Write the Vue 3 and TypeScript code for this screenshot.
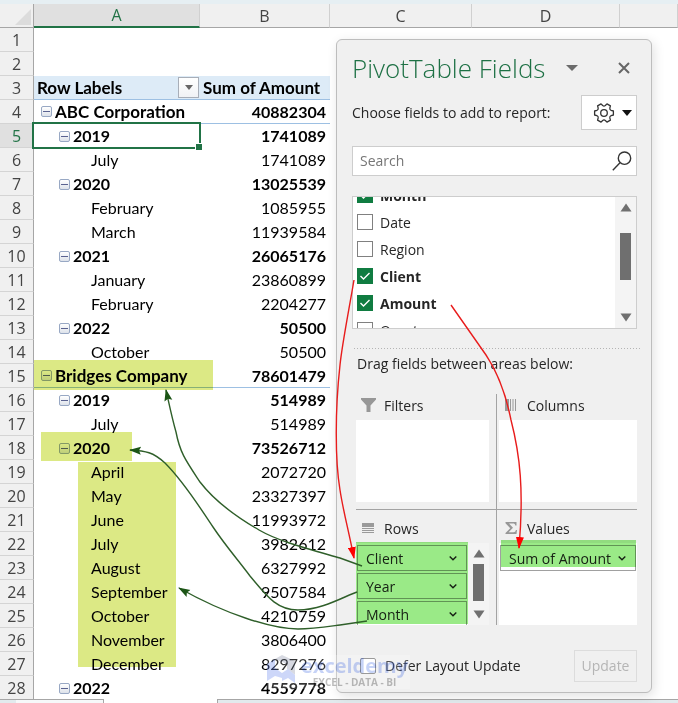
<script setup lang="ts">
import { ref } from 'vue'

type Level = 'client' | 'year' | 'month'
interface SheetRow { n: number; label?: string; level?: Level; amount?: string; header?: boolean; ruled?: boolean }
interface Field { name: string; on: boolean }
interface Arrow { d: string; color: string }

const columns: string[] = ['A', 'B', 'C', 'D', '']

const rows: SheetRow[] = [
  { n: 1 },
  { n: 2 },
  { n: 3, label: 'Row Labels', amount: 'Sum of Amount', header: true, ruled: true },
  { n: 4, label: 'ABC Corporation', level: 'client', amount: '40882304', ruled: true },
  { n: 5, label: '2019', level: 'year', amount: '1741089' },
  { n: 6, label: 'July', level: 'month', amount: '1741089' },
  { n: 7, label: '2020', level: 'year', amount: '13025539' },
  { n: 8, label: 'February', level: 'month', amount: '1085955' },
  { n: 9, label: 'March', level: 'month', amount: '11939584' },
  { n: 10, label: '2021', level: 'year', amount: '26065176' },
  { n: 11, label: 'January', level: 'month', amount: '23860899' },
  { n: 12, label: 'February', level: 'month', amount: '2204277' },
  { n: 13, label: '2022', level: 'year', amount: '50500' },
  { n: 14, label: 'October', level: 'month', amount: '50500' },
  { n: 15, label: 'Bridges Company', level: 'client', amount: '78601479', ruled: true },
  { n: 16, label: '2019', level: 'year', amount: '514989' },
  { n: 17, label: 'July', level: 'month', amount: '514989' },
  { n: 18, label: '2020', level: 'year', amount: '73526712' },
  { n: 19, label: 'April', level: 'month', amount: '2072720' },
  { n: 20, label: 'May', level: 'month', amount: '23327397' },
  { n: 21, label: 'June', level: 'month', amount: '11993972' },
  { n: 22, label: 'July', level: 'month', amount: '3982612' },
  { n: 23, label: 'August', level: 'month', amount: '6327992' },
  { n: 24, label: 'September', level: 'month', amount: '9507584' },
  { n: 25, label: 'October', level: 'month', amount: '4210759' },
  { n: 26, label: 'November', level: 'month', amount: '3806400' },
  { n: 27, label: 'December', level: 'month', amount: '8297276' },
  { n: 28, label: '2022', level: 'year', amount: '4559778' },
]

const fields = ref<Field[]>([
  { name: 'Month', on: true },
  { name: 'Date', on: false },
  { name: 'Region', on: false },
  { name: 'Client', on: true },
  { name: 'Amount', on: true },
  { name: 'Quarter', on: false },
])

const rowFields: string[] = ['Client', 'Year', 'Month']
const search = ref('')
const defer = ref(false)

const arrows: Arrow[] = [
  { color: 'green', d: 'M362 566 L340 558 C305 548 278 541 259 530 C240 519 216 503 200 482 C186 461 180 453 176 432 C172 418 170 408 166 390' },
  { color: 'green', d: 'M357 592 C345 596 322 610 298 610 C276 610 266 595 250 576 C238 560 225 545 213 527 C200 508 185 483 165 463 C153 452 146 451 130 450' },
  { color: 'green', d: 'M367 621 L340 625 C325 627 312 629 298 629 C272 629 225 614 179 588' },
  { color: 'red', d: 'M354 280 C348 315 342 345 340 365 C335 410 335 460 340 490 C343 510 348 528 354 558' },
  { color: 'red', d: 'M451 305 L486 355 C500 376 507 400 511 420 C520 455 524 490 519 548' },
]

// Six-toothed gear: flat tips every 60 degrees joined by curved valleys.
function gearPath(): string {
  const at = (deg: number, r: number): string => {
    const a = (deg * Math.PI) / 180
    return `${(11 + r * Math.cos(a)).toFixed(2)} ${(11 + r * Math.sin(a)).toFixed(2)}`
  }
  let d = ''
  for (let i = 0; i < 6; i++) {
    const t = i * 60
    d += `${i === 0 ? 'M' : 'L'}${at(t - 12, 9.6)} L${at(t + 12, 9.6)} L${at(t + 20, 7.6)} Q${at(t + 30, 6.4)} ${at(t + 40, 7.6)} `
  }
  return d + 'Z'
}
const gear = gearPath()
</script>

<template>
  <main class="workbook">
    <div class="ribbon-edge"></div>
    <table class="sheet">
      <colgroup>
        <col class="c-num" /><col class="c-a" /><col class="c-b" /><col class="c-c" /><col class="c-d" /><col />
      </colgroup>
      <thead>
        <tr>
          <th class="corner"><svg width="16" height="16" viewBox="0 0 16 16"><path d="M16 0V16H0Z" fill="#dcdcdc" /></svg></th>
          <th v-for="c in columns" :key="c" :class="{ active: c === 'A' }" scope="col">{{ c }}</th>
        </tr>
      </thead>
      <tbody>
        <tr v-for="r in rows" :key="r.n" :class="[r.level, { header: r.header, ruled: r.ruled }]">
          <th scope="row" :class="{ current: r.n === 5 }">{{ r.n }}</th>
          <td class="label" :class="{ selected: r.n === 5 }">
            <div class="label-in">
              <button v-if="r.level === 'client' || r.level === 'year'" class="toggle" aria-label="Collapse"></button>
              <span>{{ r.label }}</span>
              <button v-if="r.header" class="filter" aria-label="Filter row labels">
                <svg width="8" height="5" viewBox="0 0 8 5"><path d="M0 0H8L4 5Z" fill="#666" /></svg>
              </button>
            </div>
          </td>
          <td class="amount">{{ r.amount }}</td>
          <td></td><td></td><td></td>
        </tr>
      </tbody>
    </table>
    <div class="tabs"><i class="tab-nav"></i><i class="tab"></i><i class="tab-on"></i><i class="tab-rest"></i></div>

    <aside class="panel">
      <header class="panel-head">
        <h1>PivotTable Fields</h1>
        <button class="plain" aria-label="Pane options"><svg width="12" height="6" viewBox="0 0 12 6"><path d="M0 0H12L6 6Z" fill="#6b6b6b" /></svg></button>
        <button class="plain close" aria-label="Close"><svg width="12" height="12" viewBox="0 0 12 12"><path d="M1 1L11 11M11 1L1 11" stroke="#666" stroke-width="2" /></svg></button>
      </header>

      <div class="choose">
        <span>Choose fields to add to report:</span>
        <button class="tools" aria-label="Tools">
          <svg width="22" height="22" viewBox="0 0 22 22" fill="none" stroke="#333" stroke-width="1.3" stroke-linejoin="round"><path :d="gear" /><circle cx="11" cy="11" r="3.3" /></svg>
          <svg width="10" height="6" viewBox="0 0 10 6"><path d="M0 0H10L5 6Z" fill="#111" /></svg>
        </button>
      </div>

      <div class="search">
        <input v-model="search" type="text" placeholder="Search" aria-label="Search fields" />
        <svg width="20" height="20" viewBox="0 0 20 20" fill="none" stroke="#333" stroke-width="1.4"><circle cx="12.5" cy="7.2" r="6.2" /><path d="M8 11.8L0.8 19.2" /></svg>
      </div>

      <div class="field-box">
        <div class="field-list">
          <label v-for="f in fields" :key="f.name" :class="{ on: f.on }">
            <input v-model="f.on" type="checkbox" /><span>{{ f.name }}</span>
          </label>
        </div>
        <div class="scroll">
          <svg width="12" height="9" viewBox="0 0 12 9"><path d="M6 0.5L11.5 8.5H0.5Z" fill="#707070" /></svg>
          <i class="thumb"></i><i class="track"></i>
          <svg width="12" height="9" viewBox="0 0 12 9"><path d="M6 8.5L11.5 0.5H0.5Z" fill="#707070" /></svg>
        </div>
      </div>

      <div class="dots"></div>
      <p class="drag">Drag fields between areas below:</p>

      <div class="areas">
        <section>
          <h2><svg width="15" height="14" viewBox="0 0 15 14"><path d="M0 0H15V1.5L9.5 7.5V14H5.5V7.5L0 1.5Z" fill="#979797" /></svg>Filters</h2>
          <div class="zone"></div>
        </section>
        <section>
          <h2><svg width="15" height="14" viewBox="0 0 15 14"><path d="M1 1H5V13H1Z" fill="#9a9a9a" /><path d="M6.5 1V13M9 1V13M11.5 1V13" stroke="#9a9a9a" /></svg>Columns</h2>
          <div class="zone"></div>
        </section>
        <section>
          <h2><svg width="15" height="14" viewBox="0 0 15 14"><path d="M1 2H13V6H1Z" fill="#9a9a9a" /><path d="M1 7.5H13M1 9.5H13M1 11.5H13" stroke="#9a9a9a" /></svg>Rows</h2>
          <div class="zone">
            <div class="chips">
              <button v-for="c in rowFields" :key="c" class="chip">{{ c }}
                <svg width="8" height="5" viewBox="0 0 8 5" fill="none" stroke="#222" stroke-width="1.4"><path d="M0.7 0.6L4 3.8L7.3 0.6" /></svg>
              </button>
            </div>
            <div class="scroll">
              <svg width="12" height="9" viewBox="0 0 12 9"><path d="M6 0.5L11.5 8.5H0.5Z" fill="#707070" /></svg>
              <i class="thumb"></i>
              <svg width="12" height="9" viewBox="0 0 12 9"><path d="M6 8.5L11.5 0.5H0.5Z" fill="#707070" /></svg>
            </div>
          </div>
        </section>
        <section>
          <h2><svg width="15" height="14" viewBox="0 0 15 14"><path d="M1.5 1H12.5V4.5H11.3C11 3 10.6 2.6 9 2.6H5L9 6.8L4.6 11.2H9.4C11 11.2 11.5 10.6 11.9 9H13L12.5 13H1.5V12L6.2 7.2L1.5 2.2Z" fill="#979797" /></svg>Values</h2>
          <div class="zone">
            <div class="chips">
              <button class="chip">Sum of Amount
                <svg width="8" height="5" viewBox="0 0 8 5" fill="none" stroke="#222" stroke-width="1.4"><path d="M0.7 0.6L4 3.8L7.3 0.6" /></svg>
              </button>
            </div>
          </div>
        </section>
      </div>

      <footer class="panel-foot">
        <label><input v-model="defer" type="checkbox" /><span>Defer Layout Update</span></label>
        <button class="update" disabled>Update</button>
      </footer>
    </aside>

    <svg class="overlay marker" width="678" height="703" viewBox="0 0 678 703" aria-hidden="true">
      <g fill="#dce985">
        <rect x="34" y="360" width="179" height="30" />
        <rect x="41" y="432" width="91" height="29" />
        <rect x="78" y="462" width="98" height="205" />
      </g>
      <g fill="#9aea87">
        <rect x="356" y="542" width="112" height="82" />
        <rect x="501" y="540" width="135" height="27" />
      </g>
    </svg>
    <svg class="overlay" width="678" height="703" viewBox="0 0 678 703" aria-hidden="true">
      <defs>
        <marker id="head-green" markerUnits="userSpaceOnUse" markerWidth="13" markerHeight="9" refX="11" refY="4.5" orient="auto"><path d="M0 0.5L12 4.5L0 8.5L2 4.5Z" fill="#1c5516" /></marker>
        <marker id="head-red" markerUnits="userSpaceOnUse" markerWidth="13" markerHeight="9" refX="11" refY="4.5" orient="auto"><path d="M0 0.5L12 4.5L0 8.5Z" fill="#f00" /></marker>
      </defs>
      <path v-for="a in arrows" :key="a.d" :d="a.d" :class="a.color" :marker-end="`url(#head-${a.color})`" />
    </svg>

    <div class="brand">
      <svg width="30" height="30" viewBox="0 0 30 30"><path d="M8 4L15 0L28 6V20L20 14V9Z" fill="#8b93a8" /><path d="M0 9L8 4V13L15 18V23L8 21L0 26Z" fill="#6f8cf0" /><path d="M15 18L21 14L28 20V28L21 23L15 26Z" fill="#6f8cf0" /></svg>
      <div><b>exceldemy</b><small>EXCEL - DATA - BI</small></div>
    </div>
  </main>
</template>

<style>
body { background: #fff; }
</style>

<style scoped>
* { box-sizing: border-box; }
button, input { font: inherit; color: inherit; margin: 0; padding: 0; }
button { cursor: pointer; }
svg { flex: none; display: block; }

.workbook {
  position: relative;
  min-height: 100vh;
  overflow: hidden;
  background: #fff;
  font-family: "Open Sans", "Noto Sans", sans-serif;
  font-size: 14px;
  color: #262626;
}
.ribbon-edge { height: 4px; background: #e6eff3; }

.sheet { width: 100%; table-layout: fixed; border-collapse: separate; border-spacing: 0; }
.c-num { width: 34px; }
.c-a { width: 166px; }
.c-b { width: 130px; }
.c-c { width: 142px; }
.c-d { width: 148px; }
.sheet th, .sheet td { padding: 0; height: 24px; line-height: 22px; }
.sheet th { font-weight: 400; font-size: 16px; color: #444; background: #f0f0f0; }
.sheet thead th { border-bottom: 1px solid #a6a6a6; border-right: 1px solid #d0d0d0; }
.sheet thead th.corner { border-right-color: #a6a6a6; }
.corner svg { margin: 3px 2px 0 auto; }
.sheet thead th.active { background: #e0e0e0; border-bottom: 2px solid #217346; color: #217346; }
.sheet tbody th { border-right: 1px solid #a6a6a6; border-bottom: 1px solid #d4d4d4; }
.sheet tbody th.current { background: #e0e0e0; color: #217346; }
.sheet td { font-family: Lato, "Liberation Sans", sans-serif; font-size: 16px; color: #000; }
.label-in { display: flex; align-items: center; gap: 3px; height: 22px; padding-left: 3px; }
.client .label-in { padding-left: 7px; }
.year .label-in { padding-left: 25px; }
.month .label-in { padding-left: 57px; }
.amount { text-align: right; padding-right: 4px !important; }
.header td, .client td, .year td { font-weight: 700; }
.header td, .client .label { font-size: 17px; }
.header .label, .header .amount { background: #ddebf7; }
.header .amount { text-align: left; padding: 0 0 0 3px !important; }
.ruled .label, .ruled .amount { border-bottom: 1px solid #9dc0e3; }
.toggle { width: 11px; height: 11px; border: 1px solid #98a8c4; border-radius: 2px; background: linear-gradient(#5a6290, #5a6290) center / 7px 1px no-repeat, linear-gradient(#fff, #dde2ea); }
.filter { display: flex; align-items: center; justify-content: center; width: 21px; height: 21px; margin-left: auto; margin-right: 1px; border: 1px solid #a8aeb8; background: linear-gradient(#fff, #f0f2f5); }
.selected { position: relative; }
.selected::before { content: ""; position: absolute; inset: -2px -1px -1px -2px; border: 2px solid #217346; }
.selected::after { content: ""; position: absolute; right: -2px; bottom: -2px; width: 6px; height: 6px; background: #217346; border: 1px solid #fff; border-width: 1px 0 0 1px; }

.tabs { display: flex; height: 4px; margin-top: -1px; }
.tabs i { border-top: 1px solid #a6a6a6; background: #e2eaed; }
.tabs .tab-nav { width: 16px; }
.tabs .tab { width: 88px; background: #f6f8f9; border-right: 1px solid #a6a6a6; }
.tabs .tab-on { width: 113px; background: #fff; border-top-color: #fff; }
.tabs .tab-rest { flex: 1; border-left: 1px solid #a6a6a6; }

.panel {
  position: absolute;
  left: 336px;
  top: 39px;
  width: 316px;
  display: flex;
  flex-direction: column;
  padding: 0 14px 10px 15px;
  border: 1px solid #bdbdbd;
  border-radius: 6px;
  background: #f0f0f0;
  box-shadow: 2px 3px 12px rgba(0, 0, 0, 0.12);
}
.panel-head { display: flex; align-items: center; height: 55px; padding-right: 7px; }
.panel-head h1 { flex: 1; margin: 0; font-size: 26px; line-height: 30px; font-weight: 300; color: #1e7145; white-space: nowrap; }
.plain { border: 0; background: none; }
.close { margin-left: 40px; }
.choose { display: flex; align-items: center; justify-content: space-between; height: 35px; white-space: nowrap; }
.tools { display: flex; align-items: center; justify-content: center; gap: 7px; width: 56px; height: 35px; padding-left: 6px; border: 1px solid #cdcdcd; background: #fff; }
.search { display: flex; align-items: center; height: 30px; margin-top: 16px; padding: 0 4px 0 7px; border: 1px solid #cdcdcd; background: #fff; }
.search input { flex: 1; min-width: 0; border: 0; outline: 0; background: none; line-height: 20px; }
.search input::placeholder { color: #767676; opacity: 1; }

.field-box { display: flex; height: 133px; margin-top: 20px; border: 1px solid #cdcdcd; background: #fff; overflow: hidden; }
.field-list { flex: 1; display: flex; flex-direction: column; justify-content: center; padding-left: 4px; }
label { display: flex; align-items: center; gap: 7px; }
.field-list label { flex: none; height: 27px; }
label.on { font-weight: 700; }
input[type="checkbox"] { appearance: none; width: 16px; height: 16px; border: 1px solid #808080; background: #fff; }
input[type="checkbox"]:checked {
  border-color: #107c41;
  background: #107c41 url("data:image/svg+xml,%3Csvg xmlns='http://www.w3.org/2000/svg' width='14' height='14' fill='none' stroke='white' stroke-width='1.4'%3E%3Cpath d='M2.5 7L5.5 10L11.5 4'/%3E%3C/svg%3E") center no-repeat;
}
.scroll { flex: none; display: flex; flex-direction: column; align-items: center; width: 21px; padding: 6px 0; background: #f4f4f4; }
.scroll .thumb { width: 11px; height: 47px; margin-top: 21px; background: #6f6f6f; }
.scroll .track { flex: 1; }

.dots { height: 1px; margin: 19px -3px 0 2px; background: repeating-linear-gradient(90deg, #b4b4b4 0 1px, transparent 1px 3px); }
.drag { height: 30px; margin: 0 0 15px; padding-left: 5px; line-height: 30px; white-space: nowrap; }

.areas { display: grid; grid-template-columns: 141px 1fr; padding-left: 4px; }
.areas section { min-width: 0; }
.areas section:nth-child(odd) { padding-right: 7px; border-right: 1px solid #a3a3a3; }
.areas section:nth-child(even) { padding-left: 2px; }
.areas section:nth-child(-n + 2) { padding-bottom: 7px; border-bottom: 1px solid #a3a3a3; }
.areas section:nth-child(n + 3) { padding-top: 7px; }
.areas h2 { display: flex; align-items: center; gap: 8px; height: 26px; margin: 0; padding: 0 0 4px 5px; font-size: 14px; font-weight: 400; }
.zone { display: flex; height: 82px; background: #fff; overflow: hidden; }
.chips { flex: 1; display: flex; flex-direction: column; gap: 2px; padding: 2px 1px 0; }
.chip { flex: none; display: flex; align-items: center; justify-content: space-between; height: 26px; padding: 0 9px 0 8px; border: 1px solid #a0a0a0; background: #fff; text-align: left; white-space: nowrap; }
.zone .scroll { padding: 6px 0; }
.zone .thumb { height: 38px; margin: 6px 0 9px; }

.panel-foot { display: flex; align-items: center; justify-content: space-between; height: 33px; margin-top: 24px; padding-left: 8px; }
.panel-foot label { gap: 9px; white-space: nowrap; }
.panel-foot input { border-radius: 2px; }
.update { width: 63px; height: 32px; border: 1px solid #dcdcdc; background: none; color: #b5b5b5; }

.overlay { position: absolute; left: 0; top: 0; pointer-events: none; }
.marker { mix-blend-mode: multiply; }
.overlay path { fill: none; stroke-width: 1.4; }
.overlay marker path { stroke: none; fill: #f00; }
.overlay #head-green path { fill: #1c5516; }
.overlay path.green { stroke: #2f5f2a; }
.overlay path.red { stroke: #e81c1c; }

.brand { position: absolute; left: 267px; top: 655px; display: flex; gap: 4px; width: 143px; height: 34px; opacity: 0.34; background: rgba(255, 255, 255, 0.6); pointer-events: none; }
.brand div { display: flex; flex-direction: column; align-items: center; }
.brand b { font-size: 20px; line-height: 21px; color: #5c7fe8; }
.brand small { font-size: 10px; line-height: 12px; font-weight: 700; color: #444; white-space: nowrap; }
</style>
